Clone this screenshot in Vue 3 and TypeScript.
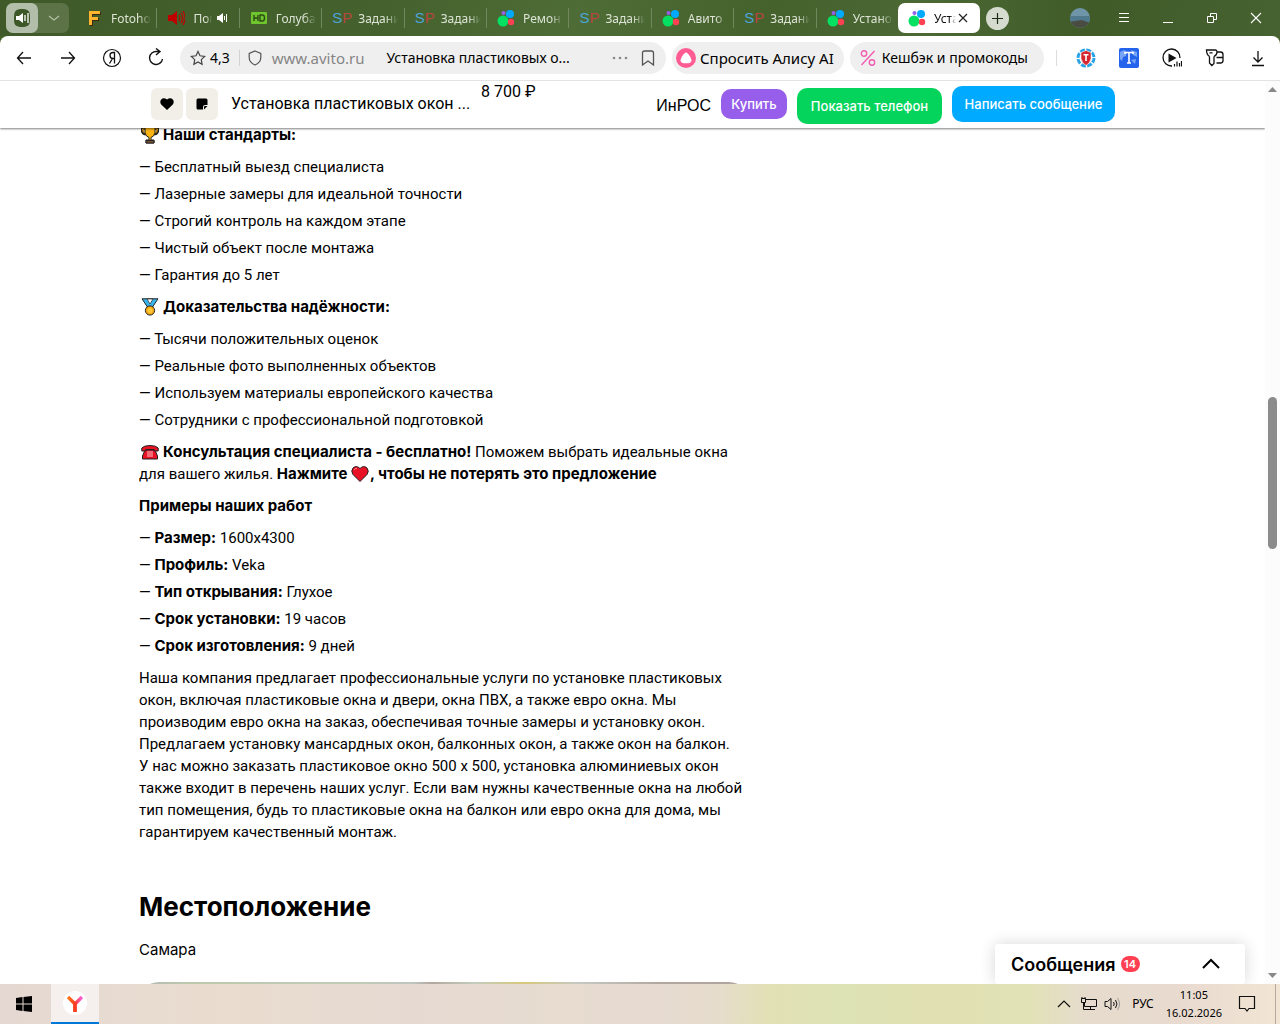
<script setup lang="ts">
import { ref } from 'vue'

type IconKind = 'f' | 'sound' | 'hd' | 'sp' | 'avito'
interface Tab { icon: IconKind; label: string; playing?: boolean }
interface Example { name: string; value: string }

const tabs: Tab[] = [
  { icon: 'f', label: 'Fotoho' },
  { icon: 'sound', label: 'Пог', playing: true },
  { icon: 'hd', label: 'Голуба' },
  { icon: 'sp', label: 'Задани' },
  { icon: 'sp', label: 'Задани' },
  { icon: 'avito', label: 'Ремон' },
  { icon: 'sp', label: 'Задани' },
  { icon: 'avito', label: 'Авито' },
  { icon: 'sp', label: 'Задани' },
  { icon: 'avito', label: 'Устано' },
]

const standards: string[] = [
  'Бесплатный выезд специалиста',
  'Лазерные замеры для идеальной точности',
  'Строгий контроль на каждом этапе',
  'Чистый объект после монтажа',
  'Гарантия до 5 лет',
]
const proofs: string[] = [
  'Тысячи положительных оценок',
  'Реальные фото выполненных объектов',
  'Используем материалы европейского качества',
  'Сотрудники с профессиональной подготовкой',
]
const examples: Example[] = [
  { name: 'Размер:', value: '1600х4300' },
  { name: 'Профиль:', value: 'Veka' },
  { name: 'Тип открывания:', value: 'Глухое' },
  { name: 'Срок установки:', value: '19 часов' },
  { name: 'Срок изготовления:', value: '9 дней' },
]
const about: string[] = [
  'Наша компания предлагает профессиональные услуги по установке пластиковых',
  'окон, включая пластиковые окна и двери, окна ПВХ, а также евро окна. Мы',
  'производим евро окна на заказ, обеспечивая точные замеры и установку окон.',
  'Предлагаем установку мансардных окон, балконных окон, а также окон на балкон.',
  'У нас можно заказать пластиковое окно 500 х 500, установка алюминиевых окон',
  'также входит в перечень наших услуг. Если вам нужны качественные окна на любой',
  'тип помещения, будь то пластиковые окна на балкон или евро окна для дома, мы',
  'гарантируем качественный монтаж.',
]
const address = ref('Установка пластиковых о...')
</script>

<template>
  <div class="screen">
    <header class="strip">
      <div class="group">
        <button class="group-sound" aria-label="Вкладки со звуком">
          <svg width="20" height="20" viewBox="0 0 20 20"><path d="M10 1c6 0 8 2 8 8v3c0 5-2 7-8 7s-8-2-8-7V9c0-6 2-8 8-8z" fill="#3e5728" /><path d="M4 8h3l4-3v10l-4-3H4z" fill="#fff" /><path d="M13 7v6M16 5v10" stroke="#fff" stroke-width="1.3" /></svg>
        </button>
        <button class="group-more" aria-label="Группы вкладок">
          <svg width="12" height="8" viewBox="0 0 12 8"><path d="M1 2l5 4 5-4" fill="none" stroke="#b5c2a8" stroke-width="1.2" /></svg>
        </button>
      </div>
      <nav class="tabs">
        <a v-for="(tab, i) in tabs" :key="i" href="#" class="tab">
          <svg v-if="tab.icon === 'f'" class="fav" viewBox="0 0 18 18"><path d="M5 17V3h11v3H8v3h6v3H8v5z" fill="#3a2a12" /><path d="M4 16V2h11v3H7v3h6v3H7v5z" fill="#ffb52e" /></svg>
          <svg v-else-if="tab.icon === 'sound'" class="fav" viewBox="0 0 18 18"><path d="M1 6h4l5-4v14l-5-4H1z" fill="#c00000" /><path d="M12 6q2 3 0 6M14 4q3.500 5 0 10M16 2q4 7 0 14" stroke="#c00000" stroke-width="1.200" fill="none" /></svg>
          <svg v-else-if="tab.icon === 'hd'" class="fav" viewBox="0 0 18 18"><rect x="1" y="3" width="16" height="12" rx="1" fill="#6fc52d" /><path d="M4 6v6M8 6v6M4 9h4M10 6h2.500q2 0 2 3t-2 3H10z" fill="none" stroke="#2c4a15" stroke-width="1.400" /></svg>
          <span v-else-if="tab.icon === 'sp'" class="sp"><b>S</b><i>P</i></span>
          <svg v-else class="fav" viewBox="0 0 18 18"><circle cx="6.500" cy="4" r="2" fill="#965eeb" /><circle cx="13" cy="5" r="4" fill="#0af" /><circle cx="6" cy="12" r="5.500" fill="#04e061" /><circle cx="14" cy="13" r="3.200" fill="#ff4053" /></svg>
          <span class="tab-label" :class="{ short: tab.playing }">{{ tab.label }}</span>
          <svg v-if="tab.playing" width="11" height="10" viewBox="0 0 11 10"><path d="M0 3h2l4-3v10L2 7H0z" fill="#fff" /><path d="M7.500 3v4M9.500 1v8" stroke="#fff" /></svg>
        </a>
      </nav>
      <a href="#" class="tab active" aria-current="page">
        <svg class="fav" viewBox="0 0 18 18"><circle cx="6.500" cy="4" r="2" fill="#965eeb" /><circle cx="13" cy="5" r="4" fill="#0af" /><circle cx="6" cy="12" r="5.500" fill="#04e061" /><circle cx="14" cy="13" r="3.200" fill="#ff4053" /></svg>
        <span class="tab-label">Уста</span>
        <svg width="10" height="10" viewBox="0 0 10 10"><path d="M1 1l8 8M9 1l-8 8" stroke="#222" stroke-width="1.200" /></svg>
      </a>
      <button class="plus" aria-label="Новая вкладка"><svg width="13" height="13" viewBox="0 0 13 13"><path d="M6.500 1v11M1 6.500h11" stroke="#1d2b14" stroke-width="1.200" /></svg></button>
      <div class="window-controls">
        <button aria-label="Профиль"><svg width="20" height="20" viewBox="0 0 20 20"><defs><clipPath id="ava"><circle cx="10" cy="10" r="10" /></clipPath></defs><g clip-path="url(#ava)"><rect width="20" height="20" fill="#6f96a8" /><path d="M0 8h20v7H0z" fill="#50798c" /><path d="M0 14l5-1 7-1 8 3v6H0z" fill="#4a4c42" /></g></svg></button>
        <button aria-label="Меню"><svg width="12" height="12" viewBox="0 0 12 12"><path d="M1 1.500h10M1 5.500h10M1 9.500h10" stroke="#fff" /></svg></button>
        <button aria-label="Свернуть"><svg width="12" height="12" viewBox="0 0 12 12"><path d="M1 10.500h10" stroke="#fff" /></svg></button>
        <button aria-label="Развернуть"><svg width="12" height="12" viewBox="0 0 12 12"><path d="M1.500 4.500h6v6h-6zM4.500 4V1.500h6v6H8" stroke="#fff" fill="none" /></svg></button>
        <button aria-label="Закрыть"><svg width="12" height="12" viewBox="0 0 12 12"><path d="M1 1l10 10M11 1L1 11" stroke="#fff" stroke-width="1.100" /></svg></button>
      </div>
    </header>

    <div class="toolbar-back">
      <div class="toolbar">
        <button class="nav-btn" aria-label="Назад"><svg width="16" height="14" viewBox="0 0 16 14"><path d="M15 7H1.500M7 1L1.500 7 7 13" fill="none" stroke="#111" stroke-width="1.300" /></svg></button>
        <button class="nav-btn" aria-label="Вперёд"><svg width="16" height="14" viewBox="0 0 16 14"><path d="M1 7h13.500M9 1l5.500 6L9 13" fill="none" stroke="#111" stroke-width="1.300" /></svg></button>
        <button class="nav-btn" aria-label="Яндекс"><svg width="20" height="20" viewBox="0 0 20 20"><circle cx="10" cy="10" r="8.500" fill="none" stroke="#111" stroke-width="1.200" /><path d="M12.500 15.500v-11H11q-3 0-3 3t3 3h1.500M10.500 10.500l-3 5" fill="none" stroke="#111" stroke-width="1.300" /></svg></button>
        <button class="nav-btn" aria-label="Обновить"><svg width="18" height="20" viewBox="0 0 18 20"><path d="M15.500 11a6.500 6.500 0 1 1-6-7.500h3M9 .5l4 3-4 3.500" fill="none" stroke="#111" stroke-width="1.400" /></svg></button>
        <div class="address">
          <button class="rating"><svg width="16" height="16" viewBox="0 0 16 16"><path d="M8 1.500l2 4.300 4.700.6-3.400 3.200.8 4.700L8 12l-4.100 2.300.8-4.700L1.300 6.400 6 5.800z" fill="none" stroke="#444" stroke-width="1.200" /></svg>4,3</button>
          <svg class="shield" width="14" height="16" viewBox="0 0 14 16"><path d="M7 1l5.800 2.500v4q0 5-5.800 7.500Q1.200 12.500 1.200 7.500v-4z" fill="none" stroke="#555" stroke-width="1.200" /></svg>
          <span class="host">www.avito.ru</span>
          <input v-model="address" aria-label="Адресная строка">
          <svg width="16" height="4" viewBox="0 0 16 4"><circle cx="2" cy="2" r="1.300" fill="#888" /><circle cx="8" cy="2" r="1.300" fill="#888" /><circle cx="14" cy="2" r="1.300" fill="#888" /></svg>
          <svg width="14" height="16" viewBox="0 0 14 16"><path d="M1.500 3q0-2 2-2h7q2 0 2 2v12L7 11l-5.500 4z" fill="none" stroke="#555" stroke-width="1.300" /></svg>
        </div>
        <button class="chip"><svg width="20" height="20" viewBox="0 0 20 20"><circle cx="10" cy="10" r="10" fill="#ff5c93" /><path d="M10 4.500c2 0 5.500 6 5.500 8s-2 2.800-5.500 2.800-5.500-.8-5.500-2.800 3.500-8 5.500-8z" fill="#fff" /></svg>Спросить Алису AI</button>
        <button class="chip promo"><svg width="16" height="18" viewBox="0 0 16 18"><circle cx="4" cy="4.500" r="2.700" fill="none" stroke="#f45cb0" stroke-width="1.400" /><circle cx="12" cy="13.500" r="2.700" fill="none" stroke="#f45cb0" stroke-width="1.400" /><path d="M14.500 2L1.500 16" stroke="#f45cb0" stroke-width="1.400" /></svg>Кешбэк и промокоды</button>
        <div class="extensions">
          <button aria-label="Защита"><svg width="20" height="20" viewBox="0 0 20 20"><circle cx="10" cy="10" r="8" fill="none" stroke="#2aa4e8" stroke-width="3" stroke-dasharray="5 1.280" /><path d="M10 2.500l5 2v6q-1 5-5 7-4-2-5-7v-6z" fill="#d5252f" stroke="#fff" stroke-width=".6" /><path d="M7.500 6.700h5M10 6.700v6.300" stroke="#fff" stroke-width="1.600" /></svg></button>
          <button aria-label="Переводчик"><svg width="20" height="20" viewBox="0 0 20 20"><rect width="20" height="20" rx="2" fill="#2463eb" /><path d="M1 4l4-2 3 2-1 4-3 1-1 4-2-2zM12 2l6 2v5l-4-2zM12 12l5-1-1 5z" fill="#78a5f5" /><path d="M6 6V4.500h8V6M10 4.500V15M8 15h4" fill="none" stroke="#fff" stroke-width="1.600" /></svg></button>
          <button aria-label="Музыка"><svg width="20" height="20" viewBox="0 0 20 20"><path d="M10 18A8.500 8.500 0 1 1 18 10" fill="none" stroke="#111" stroke-width="1.300" /><path d="M6.500 5.500v9l8-4.500z" fill="#111" /><path d="M12.500 16v2.500M15 13.500v5M17.500 15v3.500M19.500 13v5.500" stroke="#111" stroke-width="1.200" /></svg></button>
          <button aria-label="Пароли"><svg width="20" height="20" viewBox="0 0 20 20"><path d="M4.500 8.500V15l2.300 2.500L9 15.500V8.500M4.500 8.500Q1.500 6.500 1.500 2h9q1.500 0 1.500 2 0 3-3 4.500M4.500 4.800h3M12 4h3.500Q18 4 18 6.500v6q0 2.500-2.500 2.500H11.500M11.500 9.500H18" fill="none" stroke="#111" stroke-width="1.300" /></svg></button>
          <button aria-label="Загрузки"><svg width="14" height="18" viewBox="0 0 14 18"><path d="M7 2v11M2.500 8.500L7 13l4.500-4.500M1 16.500h12" fill="none" stroke="#111" stroke-width="1.300" /></svg></button>
        </div>
      </div>
    </div>

    <div class="viewport">
      <div class="page">
        <div class="sticky">
          <div class="wrap sticky-row">
            <button class="square" aria-label="В избранное"><svg width="14" height="12" viewBox="0 0 14 12"><path d="M7 12L1.200 6.500Q-.5 4 1 1.800 3.500-1 7 1.500q3.500-2.500 6 .3 1.500 2.200-.2 4.700z" fill="#000" /></svg></button>
            <button class="square" aria-label="Заметка"><svg width="12" height="12" viewBox="0 0 12 12"><path d="M2 .5h8q1.500 0 1.500 1.500v5H9Q7 7 7 9v2.500H2Q.5 11.500.5 10V2Q.5.5 2 .5zM8 11.500V9q0-1 1-1h2.500z" fill="#000" /></svg></button>
            <span class="ad-title">Установка пластиковых окон ...</span>
            <span class="price">8 700 ₽</span>
            <span class="seller">ИнРОС</span>
            <button class="cta buy">Купить</button>
            <button class="cta phone">Показать телефон</button>
            <button class="cta write">Написать сообщение</button>
          </div>
        </div>
        <main class="wrap">
          <article class="description">
            <p><svg class="emoji" viewBox="0 0 18 18"><path d="M4 3H1q0 5 4 5M14 3h3q0 5-4 5" fill="none" stroke="#222" stroke-width="2.600" /><path d="M4 3H1.500q0 4 3.500 4.500M14 3h2.500q0 4-3.500 4.500" fill="none" stroke="#f7a800" /><path d="M4 .8h10v6q-1 4-4 4.700V14h3v3H5v-3h3v-2.500Q5 10.800 4 6.800z" fill="#f9b313" stroke="#222" /><path d="M5 14.500h8V17H5z" fill="#7b5132" stroke="#222" /></svg><b>Наши стандарты:</b></p>
            <ul><li v-for="s in standards" :key="s">{{ s }}</li></ul>
            <p><svg class="emoji" viewBox="0 0 18 18"><path d="M1 .8h16l-6 9H7z" fill="#39b5ee" stroke="#222" /><path d="M6 1l3 5 3-5z" fill="#fff" stroke="#222" stroke-width=".7" /><circle cx="9" cy="12.500" r="4.600" fill="#f7a813" stroke="#222" /><circle cx="9" cy="12.500" r="2.500" fill="#ffc935" /></svg><b>Доказательства надёжности:</b></p>
            <ul><li v-for="s in proofs" :key="s">{{ s }}</li></ul>
            <p><svg class="emoji" viewBox="0 0 18 18"><path d="M4 7L1.500 13v3h15v-3L14 7z" fill="#e81224" stroke="#222" /><path d="M.8 8V5Q3 2.500 9 2.500T17.200 5v3h-4V6.500H4.800V8z" fill="#e81224" stroke="#222" /><path d="M6 9h6M6 11h6M6 13h6M7 8v6M9 8v6M11 8v6" stroke="#f8a0a6" stroke-width=".8" /></svg><b>Консультация специалиста - бесплатно!</b> Поможем выбрать идеальные окна<br>для вашего жилья. <b>Нажмите <svg class="emoji inline" viewBox="0 0 18 18"><path d="M9 16.500L2 9.500Q-.5 6 2 3q3.500-3 7 .5 3.500-3.500 7-.5 2.500 3 0 6.500z" fill="#e81224" stroke="#222" /><path d="M3 5q1-2 3-1.500" stroke="#ff8b92" fill="none" /></svg>, чтобы не потерять это предложение</b></p>
            <p><b>Примеры наших работ</b></p>
            <ul><li v-for="e in examples" :key="e.name"><b>{{ e.name }}</b> {{ e.value }}</li></ul>
            <p><template v-for="(line, i) in about" :key="i">{{ line }}<br v-if="i < about.length - 1"></template></p>
          </article>
          <section class="location">
            <h2>Местоположение</h2>
            <p>Самара</p>
            <div class="map"></div>
          </section>
        </main>
        <button class="messages"><span>Сообщения</span><span class="badge">14</span><svg width="18" height="12" viewBox="0 0 18 12"><path d="M1 10l8-8 8 8" fill="none" stroke="#000" stroke-width="2" /></svg></button>
      </div>
      <div class="scrollbar">
        <svg width="9" height="5" viewBox="0 0 9 5"><path d="M0 5l4.500-5L9 5z" fill="#888" /></svg>
        <div class="track"><div class="thumb"></div></div>
        <svg width="9" height="5" viewBox="0 0 9 5"><path d="M0 0l4.500 5L9 0z" fill="#888" /></svg>
      </div>
    </div>

    <footer class="taskbar">
      <button class="start" aria-label="Пуск"><svg width="16" height="16" viewBox="0 0 16 16"><path d="M0 2l6.500-1v6.500H0zM7.500 1L16 0v7.500H7.500zM0 8.500h6.500V15L0 14zM7.500 8.500H16V16l-8.500-1z" fill="#000" /></svg></button>
      <button class="app" aria-label="Яндекс Браузер"><svg width="24" height="24" viewBox="0 0 24 24"><defs><linearGradient id="yg"><stop offset="0" stop-color="#ff7a1a" /><stop offset=".5" stop-color="#fa3c28" /><stop offset="1" stop-color="#ff62e0" /></linearGradient></defs><circle cx="12" cy="12" r="12" fill="#fff" /><path d="M5 6l7 7 7-7M12 12v9" stroke="url(#yg)" stroke-width="3.400" fill="none" /><path d="M12 12.500V21" stroke="#fc3c20" stroke-width="3.400" /></svg></button>
      <div class="tray">
        <svg width="14" height="8" viewBox="0 0 14 8"><path d="M1 7l6-6 6 6" fill="none" stroke="#111" stroke-width="1.200" /></svg>
        <svg width="18" height="16" viewBox="0 0 18 16"><path d="M5 3.500h11.500v7H4.500V7M10.500 10.500v3M6 13.500h9M1.500 2.500h4v4h-4zM3.500 6.500v7h3M2 1v2M5 1v2" fill="none" stroke="#111" /></svg>
        <svg width="18" height="14" viewBox="0 0 18 14"><path d="M1 4.500h2.500L7 1.500v11l-3.500-3H1zM9.500 5q1.500 2 0 4M11.500 3q3 4 0 8" fill="none" stroke="#111" /><path d="M13.500 1q4 6 0 12" fill="none" stroke="#999" /></svg>
        <span>РУС</span>
        <time datetime="2026-02-16T11:05">11:05<br>16.02.2026</time>
        <svg width="18" height="18" viewBox="0 0 18 18"><path d="M1.500 1.500h15v12H11l-2 2.500-2-2.500H1.500z" fill="none" stroke="#111" stroke-width="1.200" /></svg>
      </div>
    </footer>
  </div>
</template>

<style>
body { margin: 0; }
</style>

<style scoped>
* { box-sizing: border-box; }
button { border: 0; padding: 0; background: none; font: inherit; color: inherit; display: flex; align-items: center; justify-content: center; }
a { text-decoration: none; color: inherit; }
svg { flex: none; }
.screen { height: 100vh; display: flex; flex-direction: column; overflow: hidden; background: #fff; color: #000; font-family: Inter, "Liberation Sans", sans-serif; }

.strip { flex: none; height: 36px; display: flex; align-items: center; padding-left: 6px; background: linear-gradient(100deg, #3f5a28, #45622e 30%, #4e6c36 45%, #45622d 60%, #4b6835 72%, #405b28 85%, #466230); font: 12px "Noto Sans", sans-serif; color: #dce3d5; }
.group { display: flex; width: 63px; height: 30px; border-radius: 7px; background: #5b7346; margin-right: 5px; }
.group-sound { width: 32px; border-radius: 7px; background: #b3beaa; }
.group-more { flex: 1; }
.tabs { display: flex; flex: 0 1 824px; min-width: 0; }
.tab { display: flex; align-items: center; flex: 1 1 0; min-width: 0; height: 30px; padding-left: 11px; position: relative; }
.tab + .tab::before { content: ""; position: absolute; left: 0; top: 5px; height: 20px; width: 1px; background: #71875d; }
.fav { width: 18px; height: 18px; margin-right: 8px; }
.sp { flex: none; width: 18px; margin-right: 8px; font: 18px/18px "Liberation Sans", sans-serif; font-size: 15px; display: flex; }
.sp b { color: #4ba3d6; font-weight: 400; }
.sp i { color: #b8453f; font-style: normal; }
.tab-label { flex: none; width: 40px; white-space: nowrap; -webkit-mask-image: linear-gradient(90deg, #000 70%, transparent); mask-image: linear-gradient(90deg, #000 70%, transparent); }
.tab-label.short { width: 19px; margin-right: 5px; }
.tab.active { flex: 0 0 82px; border-radius: 7px; background: #fff; color: #111; padding-left: 10px; }
.active .tab-label { width: 22px; margin-right: 2px; }
.plus { flex: none; width: 23px; height: 23px; margin-left: 6px; border-radius: 50%; background: #d5dccf; }
.window-controls { margin-left: auto; display: flex; padding-right: 2px; }
.window-controls button { width: 44px; height: 36px; }

.toolbar-back { flex: none; background: #45622d; }
.toolbar { height: 45px; display: flex; align-items: center; background: #fff; border-bottom: 1px solid #e3e3e3; border-radius: 8px 8px 0 0; padding: 0 1px 0 2px; font: 15px/20px "Noto Sans", sans-serif; }
.nav-btn { flex: none; width: 44px; height: 32px; }
.address { display: flex; align-items: center; flex: 1 1 0; height: 32px; margin-left: 2px; padding: 0 11px 0 10px; border-radius: 16px; background: #efefef; gap: 13px; min-width: 0; }
.rating { gap: 4px; height: 16px; font-size: 14px; padding-right: 9px; border-right: 1px solid #d2d2d2; }
.shield { margin-left: -5px; }
.host { color: #858585; margin-left: -3px; }
.address input { flex: 1; min-width: 0; border: 0; padding: 0; margin-left: 9px; background: none; font: inherit; font-size: 14px; color: #000; outline: 0; }
.chip { flex: none; height: 32px; margin-left: 6px; padding: 0 10px 0 4px; gap: 4px; border-radius: 16px; background: #efefef; white-space: nowrap; }
.chip.promo { padding: 0 16px 0 10px; gap: 6px; font-size: 14px; }
.extensions { flex: none; display: flex; align-items: center; margin-left: 12px; border-left: 1px solid #dcdcdc; padding-left: 7px; height: 16px; }
.extensions button { width: 43px; height: 32px; }

.viewport { flex: 1; min-height: 0; display: flex; }
.page { flex: 1; min-width: 0; position: relative; overflow: hidden; }
.wrap { max-width: 987px; margin: 0 auto; }
.sticky { position: relative; z-index: 1; height: 47px; background: #fff; box-shadow: 0 1px 2px rgba(0, 0, 0, .5); }
.sticky-row { display: flex; align-items: flex-start; padding-left: 12px; line-height: 22px; font-size: 16px; white-space: nowrap; }
.square { width: 32px; height: 32px; margin: 7px 3px 0 0; border-radius: 6px; background: #f2efe9; }
.ad-title { width: 240px; margin: 12px 0 0 10px; font-family: Roboto, sans-serif; }
.price { margin-left: 10px; font-family: Roboto, sans-serif; }
.seller { margin: 14px 10px 0 auto; font-family: "Liberation Sans", sans-serif; }
.cta { height: 36px; border-radius: 10px; color: #fff; font-size: 13px; font-weight: 500; }
.buy { width: 66px; height: 30px; margin-top: 8px; background: #965eeb; }
.phone { width: 145px; margin: 7px 10px 0; background: #04d45c; }
.write { width: 163px; margin: 5px 11px 0 0; background: #0af; }

.description { margin-top: -4px; font-family: Roboto, sans-serif; font-size: 15px; line-height: 22px; white-space: nowrap; }
.description p, .location p { margin: 0 0 10px; }
.description b { font-family: Inter, sans-serif; font-weight: 700; }
.emoji { width: 18px; height: 18px; margin: 0 4px 0 2px; vertical-align: -4px; }
.emoji.inline { margin: 0 1px 0 0; }
ul { list-style: none; margin: 0 0 10px; padding: 0; display: flex; flex-direction: column; gap: 5px; }
li::before { content: "— "; }
.location { margin-top: 46px; }
h2 { margin: 0 0 14px; font-size: 26px; line-height: 36px; font-weight: 700; }
.location p { font-size: 15px; line-height: 22px; margin-bottom: 21px; }
.map { width: 610px; height: 300px; border-radius: 20px; background: linear-gradient(90deg, #b5b8b2, #bcc9ae 8%, #c0ccb5 35%, #bfc4c0 45%, #b3a79f 48%, #c2cdbd 55%, #d9c77c 63%, #c4c9c2 72%, #b3a8a0 85%, #b0a59e); }
.messages { position: absolute; right: 20px; bottom: 0; width: 250px; height: 40px; padding: 0 25px 0 16px; background: #fff; border-radius: 3px; box-shadow: 0 0 16px rgba(0, 0, 0, .16); font-size: 18px; font-weight: 600; justify-content: flex-start; }
.messages svg { margin-left: auto; }
.badge { margin-left: 5px; width: 19px; height: 16px; border-radius: 8px; background: #ff4053; color: #fff; font-size: 11px; line-height: 16px; }
.scrollbar { width: 15px; display: flex; flex-direction: column; align-items: center; padding: 6px 0; background: #fcfcfc; }
.track { flex: 1; width: 9px; display: flex; flex-direction: column; }
.track::before { content: ""; flex: 305 1 0; }
.thumb { flex: 151 1 0; border-radius: 5px; background: #8b8b8b; }
.track::after { content: ""; flex: 424 1 0; }

.taskbar { flex: none; height: 40px; display: flex; background: linear-gradient(90deg, #e5d8d2, #eaddcf 18%, #e5d9d2 32%, #e7dccf 44%, #e6dad1 50%, #e6dccc 56%, #e2e0b5 60%, #dde3b4 66%, #e0e0b2 72%, #e1e2b5 80%, #e6dbcd 85%, #e8dacf 92%, #f2e5d4); font: 11px/18px "Noto Sans", sans-serif; }
.start { width: 48px; }
.app { width: 48px; margin-left: 3px; background: #f5f0ed; border-bottom: 2px solid #0078d7; }
.tray { margin-left: auto; display: flex; align-items: center; gap: 10px; padding-right: 19px; margin-right: 4px; border-right: 1px solid #b5aaa0; }
.tray svg + svg { margin-left: -1px; }
.tray svg:nth-child(3) { margin-left: -4px; }
.tray span { font-size: 12px; }
.tray time { text-align: center; margin: 0 6px 0 2px; }
</style>
